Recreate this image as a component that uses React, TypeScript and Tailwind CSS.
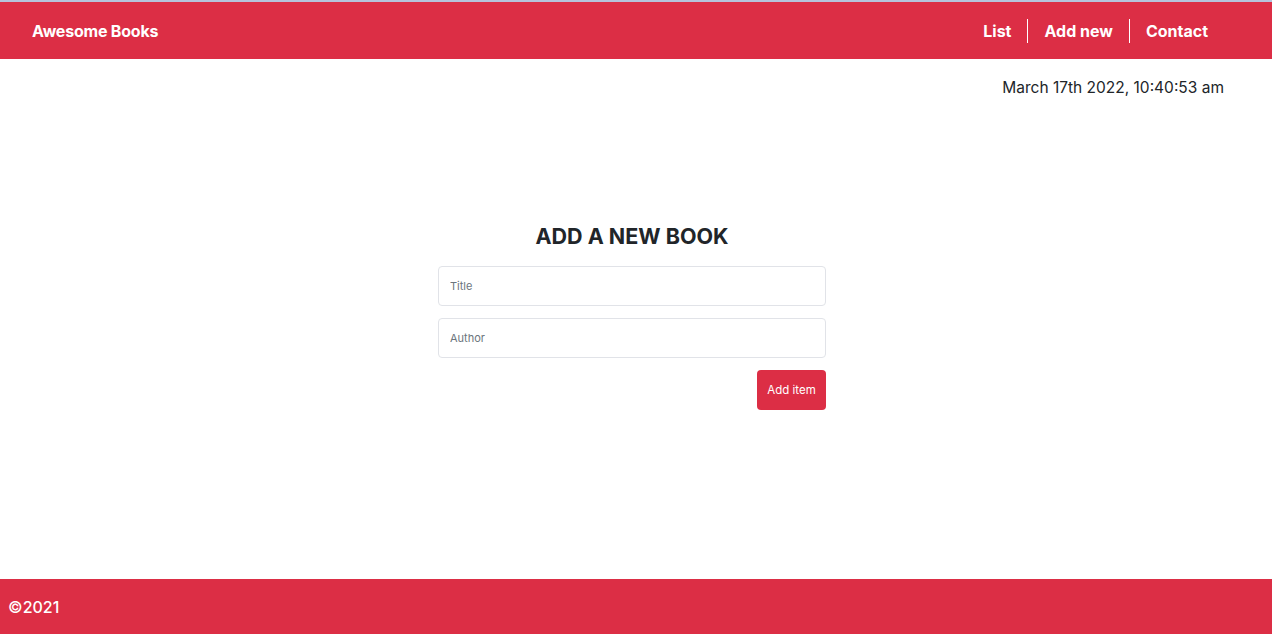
import React from 'react';

const font = { fontFamily: 'Inter, "Liberation Sans", Arial, sans-serif' };

const App: React.FC = () => {
  return (
    <div className="flex min-h-screen w-full flex-col bg-white text-[#212529]" style={font}>
      <div className="h-[2px] bg-[#b6c3dc]"></div>
      <header className="flex h-[57px] items-center justify-between bg-[#dc2e45] pl-8 pr-16 text-white">
        <h1 className="text-[16px] font-bold tracking-[-0.2px]">Awesome Books</h1>
        <nav className="flex items-center">
          <a className="px-4 text-[16px] font-bold">List</a>
          <span className="h-6 w-px bg-white"></span>
          <a className="px-4 text-[16px] font-bold">Add new</a>
          <span className="h-6 w-px bg-white"></span>
          <a className="pl-4 text-[16px] font-bold">Contact</a>
        </nav>
      </header>

      <main className="flex flex-1 flex-col pr-2">
        <p className="mt-[17px] pr-10 text-right text-[15.5px]">March 17th 2022, 10:40:53 am</p>

        <section className="mx-auto mt-[125px] flex w-[388px] flex-col">
          <h2 className="text-center text-[21.5px] font-bold leading-6">ADD A NEW BOOK</h2>
          <input
            className="mt-[18px] h-10 w-full rounded border border-[#e1e3e8] px-[11px] text-[11px] outline-none placeholder:text-[#6c757d]"
            placeholder="Title"
          />
          <input
            className="mt-3 h-10 w-full rounded border border-[#e1e3e8] px-[11px] text-[11px] outline-none placeholder:text-[#6c757d]"
            placeholder="Author"
          />
          <div className="mt-3 flex justify-end">
            <button className="h-10 w-[69px] rounded bg-[#dc2e45] text-[11.5px] text-white">Add item</button>
          </div>
        </section>
      </main>

      <footer className="flex h-[55px] items-center bg-[#dc2e45] px-2 text-[16px] font-medium text-white">
        ©2021
      </footer>
    </div>
  );
};

export default App;
